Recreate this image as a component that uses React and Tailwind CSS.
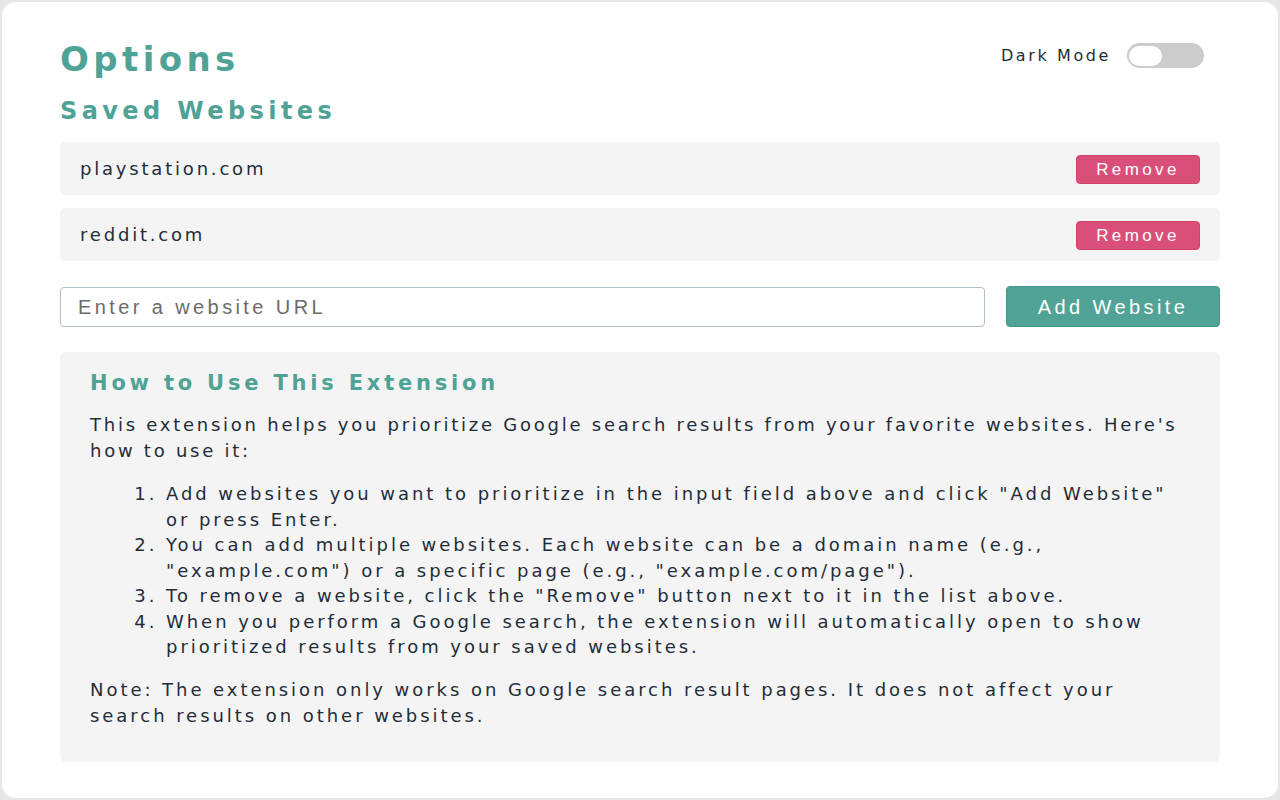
import React, { useState } from 'react';

const sites = ['playstation.com', 'reddit.com'];

const steps = [
  'Add websites you want to prioritize in the input field above and click "Add Website" or press Enter.',
  'You can add multiple websites. Each website can be a domain name (e.g., "example.com") or a specific page (e.g., "example.com/page").',
  'To remove a website, click the "Remove" button next to it in the list above.',
  'When you perform a Google search, the extension will automatically open to show prioritized results from your saved websites.',
];

export default function App() {
  const [dark, setDark] = useState(false);

  return (
    <div className="min-h-screen bg-[#e6e6e6] p-[2px] font-['DejaVu_Sans',Verdana,sans-serif] text-[#1f2d3a]">
      <div className="h-[796px] rounded-[14px] bg-white px-[58px] pt-[37px]">
        <header className="flex items-start justify-between">
          <h1 className="text-[34px] leading-[40px] font-bold tracking-[4.4px] text-[#4fa396]">Options</h1>
          <div className="mt-[4px] flex items-center gap-[16px] pr-[16px]">
            <span className="text-[16px] tracking-[2.6px]">Dark Mode</span>
            <button
              onClick={() => setDark(!dark)}
              className="flex h-[25px] w-[77px] items-center rounded-full bg-[#cccccc] px-[2px]"
            >
              <span className="h-[20px] w-[33px] rounded-full bg-white" />
            </button>
          </div>
        </header>

        <h2 className="mt-[17px] text-[24px] leading-[30px] font-bold tracking-[4.4px] text-[#4fa396]">
          Saved Websites
        </h2>

        <ul className="mt-[16px] flex flex-col gap-[13px]">
          {sites.map((site) => (
            <li
              key={site}
              className="flex h-[53px] items-center justify-between rounded-[5px] bg-[#f4f4f4] px-[20px]"
            >
              <span className="text-[18px] tracking-[2.8px]">{site}</span>
              <button className="mt-[2px] h-[29px] w-[124px] rounded-[4px] border border-[#d6406c] bg-[#da4f79] font-['Liberation_Sans',Arial,sans-serif] text-[17px] tracking-[3.4px] text-white">
                Remove
              </button>
            </li>
          ))}
        </ul>

        <div className="mt-[25px] flex items-end gap-[21px]">
          <input
            placeholder="Enter a website URL"
            className="h-[40px] flex-1 rounded-[4px] border border-[#b3bfc6] bg-white px-[17px] font-['Liberation_Sans',Arial,sans-serif] text-[20px] tracking-[3.4px] placeholder:text-[#6b6b6b]"
          />
          <button className="h-[41px] w-[214px] rounded-[4px] border border-[#3f9589] bg-[#52a397] font-['Liberation_Sans',Arial,sans-serif] text-[20px] tracking-[3.4px] text-white">
            Add Website
          </button>
        </div>

        <section className="mt-[25px] h-[410px] rounded-[6px] bg-[#f4f4f4] px-[30px] pt-[17px]">
          <h3 className="text-[21px] leading-[28px] font-bold tracking-[3.8px] text-[#4fa396]">
            How to Use This Extension
          </h3>
          <div className="text-[18px] tracking-[2.95px]">
            <p className="mt-[15px] leading-[26px] tracking-[2.75px]">
              This extension helps you prioritize Google search results from your favorite websites. Here's how to use it:
            </p>
            <ol className="mt-[17px] list-decimal pl-[76px] leading-[25.5px]">
              {steps.map((s) => (
                <li key={s}>{s}</li>
              ))}
            </ol>
            <p className="mt-[17px] leading-[26px]">
              Note: The extension only works on Google search result pages. It does not affect your search results on other websites.
            </p>
          </div>
        </section>
      </div>
    </div>
  );
}
